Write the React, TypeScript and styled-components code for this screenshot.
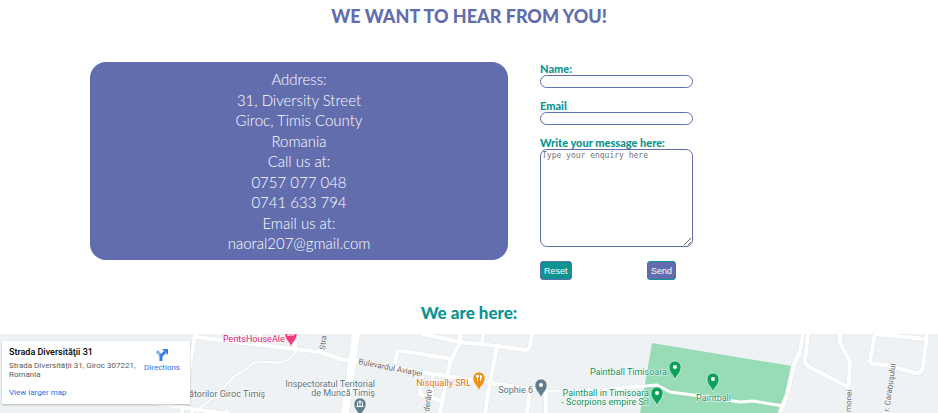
import React from "react";
import styled, { createGlobalStyle } from "styled-components";

const indigo = "#626dae";
const teal = "#0b9492";
const rounded = `Lato, "Open Sans", sans-serif`;

const GlobalStyle = createGlobalStyle`
  *, *::before, *::after { box-sizing: border-box; }
  body { margin: 0; background: #fff; }
`;

const Page = styled.main`
  display: flex;
  flex-direction: column;
  min-height: 100vh;
`;

const Title = styled.h1`
  margin: 4px 0 34px;
  text-align: center;
  font: 900 18px/24px ${rounded};
  color: ${indigo};
`;

const Contact = styled.section`
  display: grid;
  grid-template-columns: 418fr 308fr;
  align-items: start;
  gap: 32px;
  padding: 0 90px;
`;

const AddressCard = styled.address`
  display: flex;
  flex-direction: column;
  justify-content: space-between;
  min-height: 198px;
  padding: 7px 16px;
  border-radius: 16px;
  background: ${indigo};
  color: #fff;
  text-align: center;
  font: normal 300 15px/20px Lato, sans-serif;
`;

const Line = styled.div``;

const MailLink = styled.a`
  color: inherit;
  text-decoration: none;
`;

const Form = styled.form`
  display: flex;
  flex-direction: column;
  gap: 11px;
  max-width: 153px;
`;

const Field = styled.div`
  display: flex;
  flex-direction: column;
`;

const Label = styled.label`
  font: 900 11px/13px ${rounded};
  color: ${teal};
  white-space: nowrap;
`;

const TextInput = styled.input`
  width: 100%;
  height: 13px;
  padding: 0 4px;
  border: 1px solid ${indigo};
  border-radius: 7px;
  background: #fff;
  font: 9px "Liberation Sans", sans-serif;
`;

const Message = styled.textarea`
  width: 100%;
  height: 98px;
  padding: 1px;
  border: 1px solid ${indigo};
  border-radius: 7px;
  background: #fff;
  font: 8px/10px "DejaVu Sans Mono", monospace;
  &::placeholder { color: #757575; }
`;

const Actions = styled.div`
  display: flex;
  justify-content: space-between;
  padding: 3px 17px 0 0;
`;

const Button = styled.button<{ $fill: string; $edge: string }>`
  height: 19px;
  padding: 0 3px;
  border: 1px solid ${(p) => p.$edge};
  border-radius: 3px;
  background: ${(p) => p.$fill};
  color: #fff;
  font: 9px/12px "Liberation Sans", sans-serif;
`;

const MapTitle = styled.h2`
  margin: 23px 0 11px;
  text-align: center;
  font: 900 17px/20px ${rounded};
  color: ${teal};
`;

const MapFrame = styled.section`
  position: relative;
  flex: 1;
  min-height: 79px;
  overflow: hidden;
  background: #eef2f4;
`;

const MapDrawing = styled.svg`
  position: absolute;
  inset: 0;
  width: 100%;
  height: 100%;
  font-family: Roboto, sans-serif;
`;

const PlaceCard = styled.div`
  position: absolute;
  top: 7px;
  left: 2px;
  display: flex;
  justify-content: space-between;
  width: 188px;
  height: 63px;
  padding: 5px 10px 5px 7px;
  background: #fff;
  box-shadow: 0 1px 2px rgba(0, 0, 0, 0.25);
  font: 8px/9px Roboto, sans-serif;
  color: #5b5b5b;
`;

const PlaceInfo = styled.div`
  display: flex;
  flex-direction: column;
  align-items: flex-start;
  width: 130px;
`;

const PlaceName = styled.strong`
  margin-bottom: 3px;
  font-weight: 500;
  font-size: 9px;
  line-height: 12px;
  color: #000;
`;

const MapLink = styled.a`
  margin-top: 9px;
  color: #1a73e8;
  text-decoration: none;
`;

const Directions = styled.a`
  display: flex;
  flex-direction: column;
  align-items: center;
  gap: 2px;
  padding-top: 3px;
  color: #1a73e8;
  text-decoration: none;
`;

const streets = [
  "M195 0 L182 79",
  "M147 68 L232 81",
  "M196 3 L260 11 L320 18 L340 25 L358 27 L422 38 L490 49 L547 57",
  "M260 0 V11",
  "M322 8 L320 18",
  "M295 8 V19",
  "M395 29 L397 19 Q398 16 402 17 L452 25",
  "M460 0 V9 L450 28 L440 79",
  "M422 0 L460 8 L497 12 L525 16 Q529 16 530 11 L532 0",
  "M483 0 L482 10",
  "M497 12 L490 49 L485 79",
  "M423 39 L420 57 Q420 61 424 62 L442 67",
  "M433 41 L431 65",
  "M530 56 L527 79",
  "M546 57 V79",
  "M803 0 L800 18 L794 30 L787 62 Q784 68 780 79",
  "M808 0 L805 27 Q805 30 808 32 L848 53",
  "M840 0 V9 L850 28 L848 60",
  "M875 0 L870 27 Q870 30 874 30 L886 31 L916 39 Q921 40 923 33 L927 0",
  "M876 0 L926 5",
];

const tracks = [
  "M295 19 Q291 26 280 29 Q265 27 253 29 Q247 35 233 43 L220 58 L200 74 L190 79",
  "M547 57 L620 55",
];

const parkPath = "M600 56 L657 51 L670 58 L693 61 L740 68 L753 67 L783 72";

const pinPath = "M0 10 C-1 5 -6 3 -6 -3 A6 6 0 1 1 6 -3 C6 3 1 5 0 10 Z";

type PinProps = { x: number; y: number; color: string; kind?: "dot" | "food" | "civic" | "hotel" };

function Pin({ x, y, color, kind = "dot" }: PinProps) {
  return (
    <g transform={`translate(${x} ${y})`}>
      <path d={pinPath} fill={color} stroke="#fff" strokeWidth=".5" />
      {kind === "dot" && <circle cy="-3" r="2" fill="#fff" />}
      {kind === "food" && (
        <path d="M-2.5 -6 V-4 Q-1.500 -3 -.5 -4 V-6 M-1.500 -6 V0 M1.500 0 V-6 Q3 -5 2.500 -3 H1.500" fill="none" stroke="#fff" />
      )}
      {kind === "civic" && (
        <path d="M-3.500 -4.500 L0 -6.500 L3.500 -4.500 Z M-3 -4 H-2 V-1 H-3 Z M-.5 -4 H.5 V-1 H-.5 Z M2 -4 H3 V-1 H2 Z M-3.500 -1 H3.500 V0 H-3.500 Z" fill="#fff" />
      )}
      {kind === "hotel" && <path d="M-3 -6 V-1 M-3 -2 H3 V-4 H-1" fill="none" stroke="#fff" />}
    </g>
  );
}

const Halo = styled.text<{ $size?: number }>`
  font-size: ${(p) => p.$size ?? 9}px;
  paint-order: stroke;
  stroke: #fff;
  stroke-width: 1px;
  stroke-linejoin: round;
`;

const slate = "#58717d";
const green = "#0b8f50";
const road = "#5f6466";

function StreetMap() {
  return (
    <MapDrawing viewBox="0 0 938 79" preserveAspectRatio="xMidYMin slice" role="img" aria-label="Map of Giroc">
      <path d="M652 9 L792 32 L789 56 L780 79 H640 Z" fill="#98dcb7" />
      <g fill="none" strokeLinejoin="round">
        {streets.map((d) => <path key={d} d={d} stroke="#dfe4e7" strokeWidth="5" />)}
        <path d="M356 0 L345 79" stroke="#dfe4e7" strokeWidth="9" />
        {tracks.map((d) => <path key={d} d={d} stroke="#e0e5e8" strokeWidth="3" />)}
        {streets.map((d) => <path key={d} d={d} stroke="#fff" strokeWidth="4" />)}
        {tracks.map((d) => <path key={d} d={d} stroke="#fff" strokeWidth="2" />)}
        <path d={parkPath} stroke="#fff" strokeWidth="3" />
        <path d="M356 0 L345 79" stroke="#fff" strokeWidth="8" />
      </g>
      <circle cx="227" cy="79" r="3" fill="#fff" />
      <Halo x="189" y="63" fill={slate}>ătorilor Giroc Timiş</Halo>
      <Halo x="223" y="8" fill="#d81b72">PentsHouseAle</Halo>
      <Halo x="375" y="53" fill={slate} textAnchor="end">Inspectoratul Teritorial</Halo>
      <Halo x="375" y="62" fill={slate} textAnchor="end">de Muncă Timiş</Halo>
      <Halo x="471" y="52" fill="#e8710a" textAnchor="end">Nisqually SRL</Halo>
      <Halo x="533" y="59" fill={slate} textAnchor="end">Sophie 6</Halo>
      <Halo x="667" y="41" fill={green} textAnchor="end">Paintball Timisoara</Halo>
      <Halo x="649" y="62" fill={green} textAnchor="end">Paintball in Timisoara</Halo>
      <Halo x="649" y="71" fill={green} textAnchor="end">- Scorpions empire Srl</Halo>
      <Halo x="696" y="67" fill={green}>Paintball</Halo>
      <Halo $size={8} fill={road} transform="translate(358 30) rotate(11)">Bulevardul Aviaţiei</Halo>
      <Halo $size={8} fill={road} transform="translate(325 16) rotate(-84)">Stra</Halo>
      <Halo $size={8} fill={road} transform="translate(429 78) rotate(-82)">derării</Halo>
      <Halo $size={8} fill={road} transform="translate(851 78) rotate(-88)">monei</Halo>
      <Halo $size={8} fill={road} transform="translate(889 78) rotate(-82)">r. Carabuşului</Halo>
      <Pin x={291} y={3} color="#f43b82" kind="hotel" />
      <Pin x={360} y={73} color="#607d8b" kind="civic" />
      <Pin x={479} y={47} color="#f29111" kind="food" />
      <Pin x={541} y={54} color="#607d8b" />
      <Pin x={675} y={36} color="#0fa05b" />
      <Pin x={713} y={48} color="#0fa05b" />
      <Pin x={657} y={62} color="#0fa05b" />
    </MapDrawing>
  );
}

export default function App() {
  return (
    <Page>
      <GlobalStyle />
      <Title>WE WANT TO HEAR FROM YOU!</Title>
      <Contact>
        <AddressCard>
          <Line>Address:</Line>
          <Line>31, Diversity Street</Line>
          <Line>Giroc, Timis County</Line>
          <Line>Romania</Line>
          <Line>Call us at:</Line>
          <Line>0757 077 048</Line>
          <Line>0741 633 794</Line>
          <Line>Email us at:</Line>
          <Line><MailLink href="mailto:naoral207@gmail.com">naoral207@gmail.com</MailLink></Line>
        </AddressCard>
        <Form onSubmit={(e) => e.preventDefault()}>
          <Field>
            <Label htmlFor="name">Name:</Label>
            <TextInput id="name" type="text" />
          </Field>
          <Field>
            <Label htmlFor="email">Email</Label>
            <TextInput id="email" type="email" />
          </Field>
          <Field>
            <Label htmlFor="message">Write your message here:</Label>
            <Message id="message" placeholder="Type your enquiry here" />
          </Field>
          <Actions>
            <Button type="reset" $fill={teal} $edge={indigo}>Reset</Button>
            <Button type="submit" $fill={indigo} $edge={teal}>Send</Button>
          </Actions>
        </Form>
      </Contact>
      <MapTitle>We are here:</MapTitle>
      <MapFrame>
        <StreetMap />
        <PlaceCard>
          <PlaceInfo>
            <PlaceName>Strada Diversităţii 31</PlaceName>
            Strada Diversităţii 31, Giroc 307221, Romania
            <MapLink href="#map">View larger map</MapLink>
          </PlaceInfo>
          <Directions href="#directions">
            <svg width="12" height="12" viewBox="0 0 12 12" aria-hidden="true">
              <path d="M1 2 L5 7" stroke="#8ab4f0" strokeWidth="3" fill="none" />
              <path d="M5 12 V8 Q5 6 7 5 L9 3" stroke="#3b7de0" strokeWidth="3" fill="none" />
              <path d="M6 0 H12 V6 Z" fill="#3b7de0" />
            </svg>
            Directions
          </Directions>
        </PlaceCard>
      </MapFrame>
    </Page>
  );
}
